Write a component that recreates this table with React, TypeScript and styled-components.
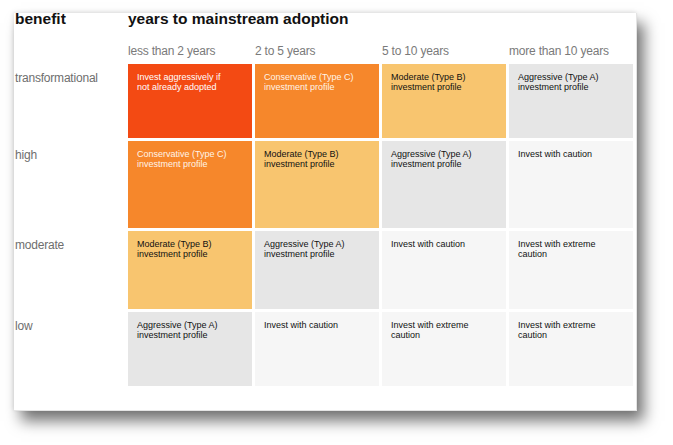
import { createGlobalStyle, styled } from "styled-components"

type Tone = "red" | "orange" | "yellow" | "gray" | "light"

type Row = {
  benefit: string
  height: number
  cells: { text: string[]; tone: Tone }[]
}

const tones: Record<Tone, { bg: string; fg: string }> = {
  red: { bg: "#f34a13", fg: "#ffffff" },
  orange: { bg: "#f6872b", fg: "#fff4e8" },
  yellow: { bg: "#f8c56f", fg: "#111111" },
  gray: { bg: "#e6e6e6", fg: "#111111" },
  light: { bg: "#f6f6f6", fg: "#111111" },
}

const periods = ["less than 2 years", "2 to 5 years", "5 to 10 years", "more than 10 years"]

const aggressive = { text: ["Aggressive (Type A)", "investment profile"], tone: "gray" as Tone }
const moderate = { text: ["Moderate (Type B)", "investment profile"], tone: "yellow" as Tone }
const conservative = { text: ["Conservative (Type C)", "investment profile"], tone: "orange" as Tone }
const caution = { text: ["Invest with caution"], tone: "light" as Tone }
const extreme = { text: ["Invest with extreme", "caution"], tone: "light" as Tone }

const rows: Row[] = [
  {
    benefit: "transformational",
    height: 74,
    cells: [
      { text: ["Invest aggressively if", "not already adopted"], tone: "red" },
      conservative,
      moderate,
      aggressive,
    ],
  },
  { benefit: "high", height: 87, cells: [conservative, moderate, aggressive, caution] },
  { benefit: "moderate", height: 78, cells: [moderate, aggressive, caution, extreme] },
  { benefit: "low", height: 74, cells: [aggressive, caution, extreme, extreme] },
]

export default function App() {
  return (
    <>
      <GlobalStyle />
      <Page>
        <Card>
          <Matrix>
            <Title>benefit</Title>
            <Title $wide>years to mainstream adoption</Title>

            <span />
            {periods.map((p) => (
              <Period key={p}>{p}</Period>
            ))}

            {rows.map((row) => (
              <RowGroup key={row.benefit} $height={row.height}>
                <Benefit>{row.benefit}</Benefit>
                {row.cells.map((cell, i) => (
                  <Cell key={i} $tone={cell.tone}>
                    {cell.text.map((line) => (
                      <Line key={line}>{line}</Line>
                    ))}
                  </Cell>
                ))}
              </RowGroup>
            ))}
          </Matrix>
        </Card>
      </Page>
    </>
  )
}

const GlobalStyle = createGlobalStyle`
  html, body {
    margin: 0;
    padding: 0;
    background: #ffffff;
    font-family: "Liberation Sans", Arial, sans-serif;
  }
`

const Page = styled.div`
  width: 673px;
  height: 445px;
  padding: 13px 0 0 14px;
  box-sizing: border-box;
  overflow: hidden;
`

const Card = styled.div`
  width: 623px;
  height: 398px;
  box-sizing: border-box;
  padding: 0 4px 0 1px;
  background: #ffffff;
  border-right: 1px solid #e4e4e4;
  border-bottom: 1px solid #e4e4e4;
  box-shadow:
    7px 10px 14px rgba(0, 0, 0, 0.55),
    -1px -1px 4px rgba(0, 0, 0, 0.1);
`

const Matrix = styled.div`
  display: grid;
  grid-template-columns: 110px repeat(4, 124px);
  column-gap: 3px;
  row-gap: 3px;
`

const Title = styled.div<{ $wide?: boolean }>`
  grid-column: ${(p) => (p.$wide ? "2 / span 4" : "1")};
  margin-top: -3px;
  height: 31px;
  font-size: 15.5px;
  line-height: 18px;
  font-weight: bold;
  color: #111111;
  white-space: nowrap;
`

const Period = styled.div`
  height: 17px;
  font-size: 12px;
  line-height: 14px;
  color: #7a7a7a;
  white-space: nowrap;
  letter-spacing: -0.2px;
`

const RowGroup = styled.div<{ $height: number }>`
  display: contents;

  & > * {
    height: ${(p) => p.$height}px;
  }
`

const Benefit = styled.div`
  padding-top: 7px;
  box-sizing: border-box;
  font-size: 12px;
  line-height: 14px;
  color: #6e6e6e;
  letter-spacing: -0.2px;
`

const Cell = styled.div<{ $tone: Tone }>`
  box-sizing: border-box;
  padding: 8px 9px 0 9px;
  background: ${(p) => tones[p.$tone].bg};
  color: ${(p) => tones[p.$tone].fg};
  font-size: 9px;
  line-height: 10px;
`

const Line = styled.div`
  white-space: nowrap;
`
